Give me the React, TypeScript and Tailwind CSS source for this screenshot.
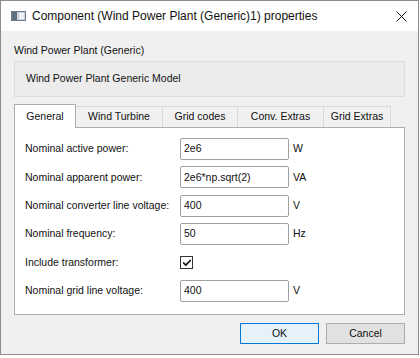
import { Check } from "lucide-react";

const rows = [
  { label: "Nominal active power:", value: "2e6", unit: "W" },
  { label: "Nominal apparent power:", value: "2e6*np.sqrt(2)", unit: "VA" },
  { label: "Nominal converter line voltage:", value: "400", unit: "V" },
  { label: "Nominal frequency:", value: "50", unit: "Hz" },
  { label: "Include transformer:", checkbox: true },
  { label: "Nominal grid line voltage:", value: "400", unit: "V" },
];

const tabs = [
  { name: "General", w: "w-[62px]" },
  { name: "Wind Turbine", w: "w-[87px]" },
  { name: "Grid codes", w: "w-[75px]" },
  { name: "Conv. Extras", w: "w-[86px]" },
  { name: "Grid Extras", w: "w-[67px]" },
];

function WindowIcon() {
  return (
    <svg width="15" height="10" viewBox="0 0 15 10">
      <rect x="0.5" y="0.5" width="14" height="9" fill="#c9d3dc" stroke="#6f7c88" />
      <rect x="1" y="1" width="5" height="8" fill="#5f6f7e" />
      <rect x="8" y="2" width="5" height="6" fill="#eef2f5" />
    </svg>
  );
}

export default function App() {
  return (
    <div className="w-[420px] h-[358px] bg-white font-['Liberation_Sans',Arial,sans-serif] text-[#111]">
      <div className="w-[419px] h-[355px] border border-[#8c8c8c] bg-[#f0f0f0] flex flex-col">
        {/* title bar */}
        <div className="h-[30px] bg-white flex items-center pl-[10px] pr-[11px]">
          <WindowIcon />
          <span className="ml-[6px] text-[12px]">Component (Wind Power Plant (Generic)1) properties</span>
          <svg className="ml-auto" width="11" height="11" viewBox="0 0 11 11">
            <path d="M0.5 0.5 L10.5 10.5 M10.5 0.5 L0.5 10.5" stroke="#111" strokeWidth="1" />
          </svg>
        </div>

        <div className="flex flex-col px-[13px] text-[10.5px]">
          <div className="mt-[11px] h-[16px] leading-[16px]">Wind Power Plant (Generic)</div>
          <div className="mt-[3px] h-[36px] border border-[#dcdcdc] bg-[#ececec] flex items-center pl-[11px]">
            Wind Power Plant Generic Model
          </div>

          {/* tabs */}
          <div className="mt-[7px] flex items-end h-[23px]">
            {tabs.map((t, i) =>
              i === 0 ? (
                <div
                  key={t.name}
                  className={`${t.w} h-[24px] -mb-px relative z-10 bg-white border border-[#adadad] border-b-0 flex items-center justify-center`}
                >
                  {t.name}
                </div>
              ) : (
                <div
                  key={t.name}
                  className={`${t.w} h-[21px] bg-[#f0f0f0] border border-[#d9d9d9] border-l-0 border-b-0 flex items-center justify-center`}
                >
                  {t.name}
                </div>
              )
            )}
          </div>
          <div className="h-[188px] bg-white border border-[#adadad] pt-[10px] pl-[10px] flex flex-col gap-[6.4px]">
            {rows.map((r) => (
              <div key={r.label} className="flex items-center h-[22px]">
                <div className="w-[155px]">{r.label}</div>
                {r.checkbox ? (
                  <div className="w-[13px] h-[13px] border border-[#333] flex items-center justify-center">
                    <Check size={10} strokeWidth={4} />
                  </div>
                ) : (
                  <>
                    <div className="w-[109px] h-[22px] border border-[#a0a0a0] rounded-[2px] flex items-center pl-[3px]">
                      {r.value}
                    </div>
                    <div className="ml-[4px]">{r.unit}</div>
                  </>
                )}
              </div>
            ))}
          </div>

          {/* buttons */}
          <div className="mt-[8px] flex justify-end gap-[7px]">
            <button className="w-[79px] h-[21px] border border-[#0078d7] bg-[#e5f1fb] text-[10.5px]">OK</button>
            <button className="w-[79px] h-[21px] border border-[#adadad] bg-[#e1e1e1] text-[10.5px]">Cancel</button>
          </div>
        </div>
      </div>
    </div>
  );
}
